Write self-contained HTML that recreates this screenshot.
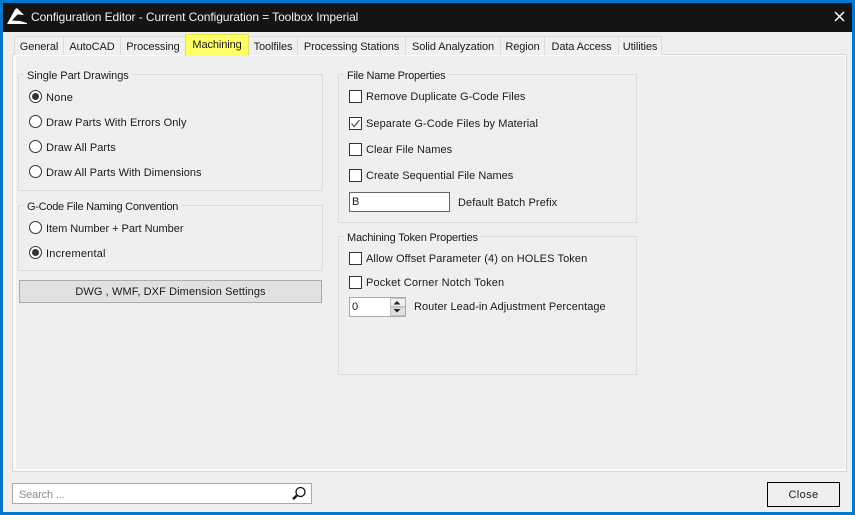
<!DOCTYPE html>
<html><head><meta charset="utf-8"><style>
html,body{margin:0;padding:0;width:855px;height:515px;overflow:hidden;background:#efefef}
body{position:relative;font:11px "Liberation Sans",sans-serif;color:#1a1a1a}
div,span{position:absolute;box-sizing:border-box}
.t{white-space:nowrap;line-height:14px;height:14px;margin-top:1px}
.tab{top:36px;height:19px;background:#f0f0f0;border:1px solid #dcdcdc;border-bottom:none;text-align:center;line-height:20px;white-space:nowrap;letter-spacing:-.1px}
.g{border:1px solid #dcdcdc}
.c{width:13px;height:13px;border:1px solid #333;background:#fff}
.r{width:13px;height:13px;border-radius:50%;border:1px solid #333;background:#fff}
.r.on::after{content:"";position:absolute;left:2px;top:2px;width:7px;height:7px;border-radius:50%;background:#333}
.l{background:#efefef;padding:0 3px}
</style></head><body>
<div style="left:0;top:0;width:855px;height:3px;background:#0078d0"></div>
<div style="left:0;top:0;width:3px;height:515px;background:#0078d0"></div>
<div style="left:852px;top:0;width:3px;height:515px;background:#0078d0"></div>
<div style="left:0;top:512px;width:855px;height:3px;background:#0078d0"></div>
<div style="left:3px;top:3px;width:849px;height:29px;background:#141414"></div>
<svg style="position:absolute;left:0;top:0" width="30" height="30" viewBox="0 0 30 30"><path d="M7 24 L15 9.5 L17 8 L24 15 L17.500 14.500 L12 20.500 L20 21 L27 23 L27 24 Z" fill="#fff"/></svg>
<div class="t" style="left:31px;top:9px;color:#f2f2f2;font-size:12px;letter-spacing:-.08px">Configuration Editor - Current Configuration = Toolbox Imperial</div>
<svg style="position:absolute;left:834px;top:11px" width="11" height="11" viewBox="0 0 11 11"><path d="M1 1L10 10M10 1L1 10" stroke="#fff" stroke-width="1.5" fill="none"/></svg>

<div style="left:12px;top:54px;width:835px;height:418px;border:1px solid #d8d8d8;background:#efefef"></div>
<div style="left:13px;top:55px;width:833px;height:416px;border:solid #fafafa;border-width:1px 1px 2px 3px"></div>

<div class="tab" style="left:14px;width:50px">General</div>
<div class="tab" style="left:63px;width:58px">AutoCAD</div>
<div class="tab" style="left:120px;width:66px">Processing</div>
<div class="tab" style="left:248px;width:50px">Toolfiles</div>
<div class="tab" style="left:297px;width:109px">Processing Stations</div>
<div class="tab" style="left:405px;width:96px">Solid Analyzation</div>
<div class="tab" style="left:500px;width:45px">Region</div>
<div class="tab" style="left:544px;width:75px">Data Access</div>
<div class="tab" style="left:618px;width:44px">Utilities</div>
<div class="tab" style="left:185px;top:34px;width:64px;height:22px;background:#ffff66;border:1px solid #e4e44a;border-bottom:none;line-height:20px">Machining</div>

<div class="g" style="left:18px;top:74px;width:305px;height:117px"></div>
<div class="t l" style="left:24px;top:68px;letter-spacing:-.05px">Single Part Drawings</div>
<div class="r on" style="left:29px;top:90px"></div><div class="t" style="left:46px;top:90px;letter-spacing:.2px">None</div>
<div class="r" style="left:29px;top:115px"></div><div class="t" style="left:46px;top:115px;letter-spacing:.09px">Draw Parts With Errors Only</div>
<div class="r" style="left:29px;top:140px"></div><div class="t" style="left:46px;top:140px;letter-spacing:.05px">Draw All Parts</div>
<div class="r" style="left:29px;top:165px"></div><div class="t" style="left:46px;top:165px;letter-spacing:.03px">Draw All Parts With Dimensions</div>

<div class="g" style="left:18px;top:205px;width:305px;height:66px"></div>
<div class="t l" style="left:24px;top:199px;letter-spacing:-.27px">G-Code File Naming Convention</div>
<div class="r" style="left:29px;top:221px"></div><div class="t" style="left:46px;top:221px;letter-spacing:-.04px">Item Number + Part Number</div>
<div class="r on" style="left:29px;top:246px"></div><div class="t" style="left:46px;top:246px;letter-spacing:.2px">Incremental</div>

<div style="left:19px;top:280px;width:303px;height:23px;background:#e1e1e1;border:1px solid #adadad;text-align:center;line-height:22px;letter-spacing:.1px">DWG , WMF, DXF Dimension Settings</div>

<div class="g" style="left:338px;top:74px;width:299px;height:149px"></div>
<div class="t l" style="left:344px;top:68px;letter-spacing:-.25px">File Name Properties</div>
<div class="c" style="left:349px;top:90px"></div><div class="t" style="left:366px;top:89px;letter-spacing:.06px">Remove Duplicate G-Code Files</div>
<div class="c" style="left:349px;top:117px"></div>
<svg style="position:absolute;left:349px;top:117px" width="13" height="13" viewBox="0 0 13 13"><path d="M2.500 6.500L5.200 9.500L10.500 3" stroke="#555" stroke-width="1.3" fill="none"/></svg>
<div class="t" style="left:366px;top:116px;letter-spacing:.08px">Separate G-Code Files by Material</div>
<div class="c" style="left:349px;top:143px"></div><div class="t" style="left:366px;top:142px;letter-spacing:.08px">Clear File Names</div>
<div class="c" style="left:349px;top:169px"></div><div class="t" style="left:366px;top:168px;letter-spacing:.02px">Create Sequential File Names</div>
<div style="left:349px;top:192px;width:101px;height:20px;background:#fff;border:1px solid #666;padding-left:2px;line-height:19px">B</div>
<div class="t" style="left:458px;top:195px;letter-spacing:.1px">Default Batch Prefix</div>

<div class="g" style="left:338px;top:236px;width:299px;height:139px"></div>
<div class="t l" style="left:344px;top:230px;letter-spacing:-.18px">Machining Token Properties</div>
<div class="c" style="left:349px;top:252px"></div><div class="t" style="left:366px;top:251px;letter-spacing:.1px">Allow Offset Parameter (4) on HOLES Token</div>
<div class="c" style="left:349px;top:276px"></div><div class="t" style="left:366px;top:275px;letter-spacing:.16px">Pocket Corner Notch Token</div>
<div style="left:349px;top:297px;width:57px;height:20px;background:#fff;border:1px solid #aaa;padding-left:2px;line-height:19px">0</div>
<div style="left:390px;top:298px;width:15px;height:9px;background:#f0f0f0;border:1px solid #c4c4c4;border-right:none"></div>
<div style="left:390px;top:307px;width:15px;height:9px;background:#e0e0e0;border:1px solid #c4c4c4;border-right:none"></div>
<svg style="position:absolute;left:390px;top:298px" width="15" height="18" viewBox="0 0 15 18"><path d="M7 3L10.500 6.500H3.500Z M3.500 11H10.500L7 14.500Z" fill="#222"/></svg>
<div class="t" style="left:414px;top:299px;letter-spacing:.06px">Router Lead-in Adjustment Percentage</div>

<div style="left:12px;top:483px;width:300px;height:21px;background:#fff;border:1px solid #aaa"></div>
<div class="t" style="left:19px;top:487px;color:#8a8a8a;letter-spacing:-.15px">Search ...</div>
<svg style="position:absolute;left:291px;top:485px" width="16" height="16" viewBox="0 0 16 16"><circle cx="9.500" cy="7" r="4.500" stroke="#111" stroke-width="1.300" fill="none"/><path d="M5.800 10.500L2 14.200" stroke="#111" stroke-width="2.400"/></svg>
<div style="left:767px;top:482px;width:73px;height:25px;border:1px solid #000;background:#efefef;text-align:center;line-height:24px;letter-spacing:.4px">Close</div>
</body></html>
